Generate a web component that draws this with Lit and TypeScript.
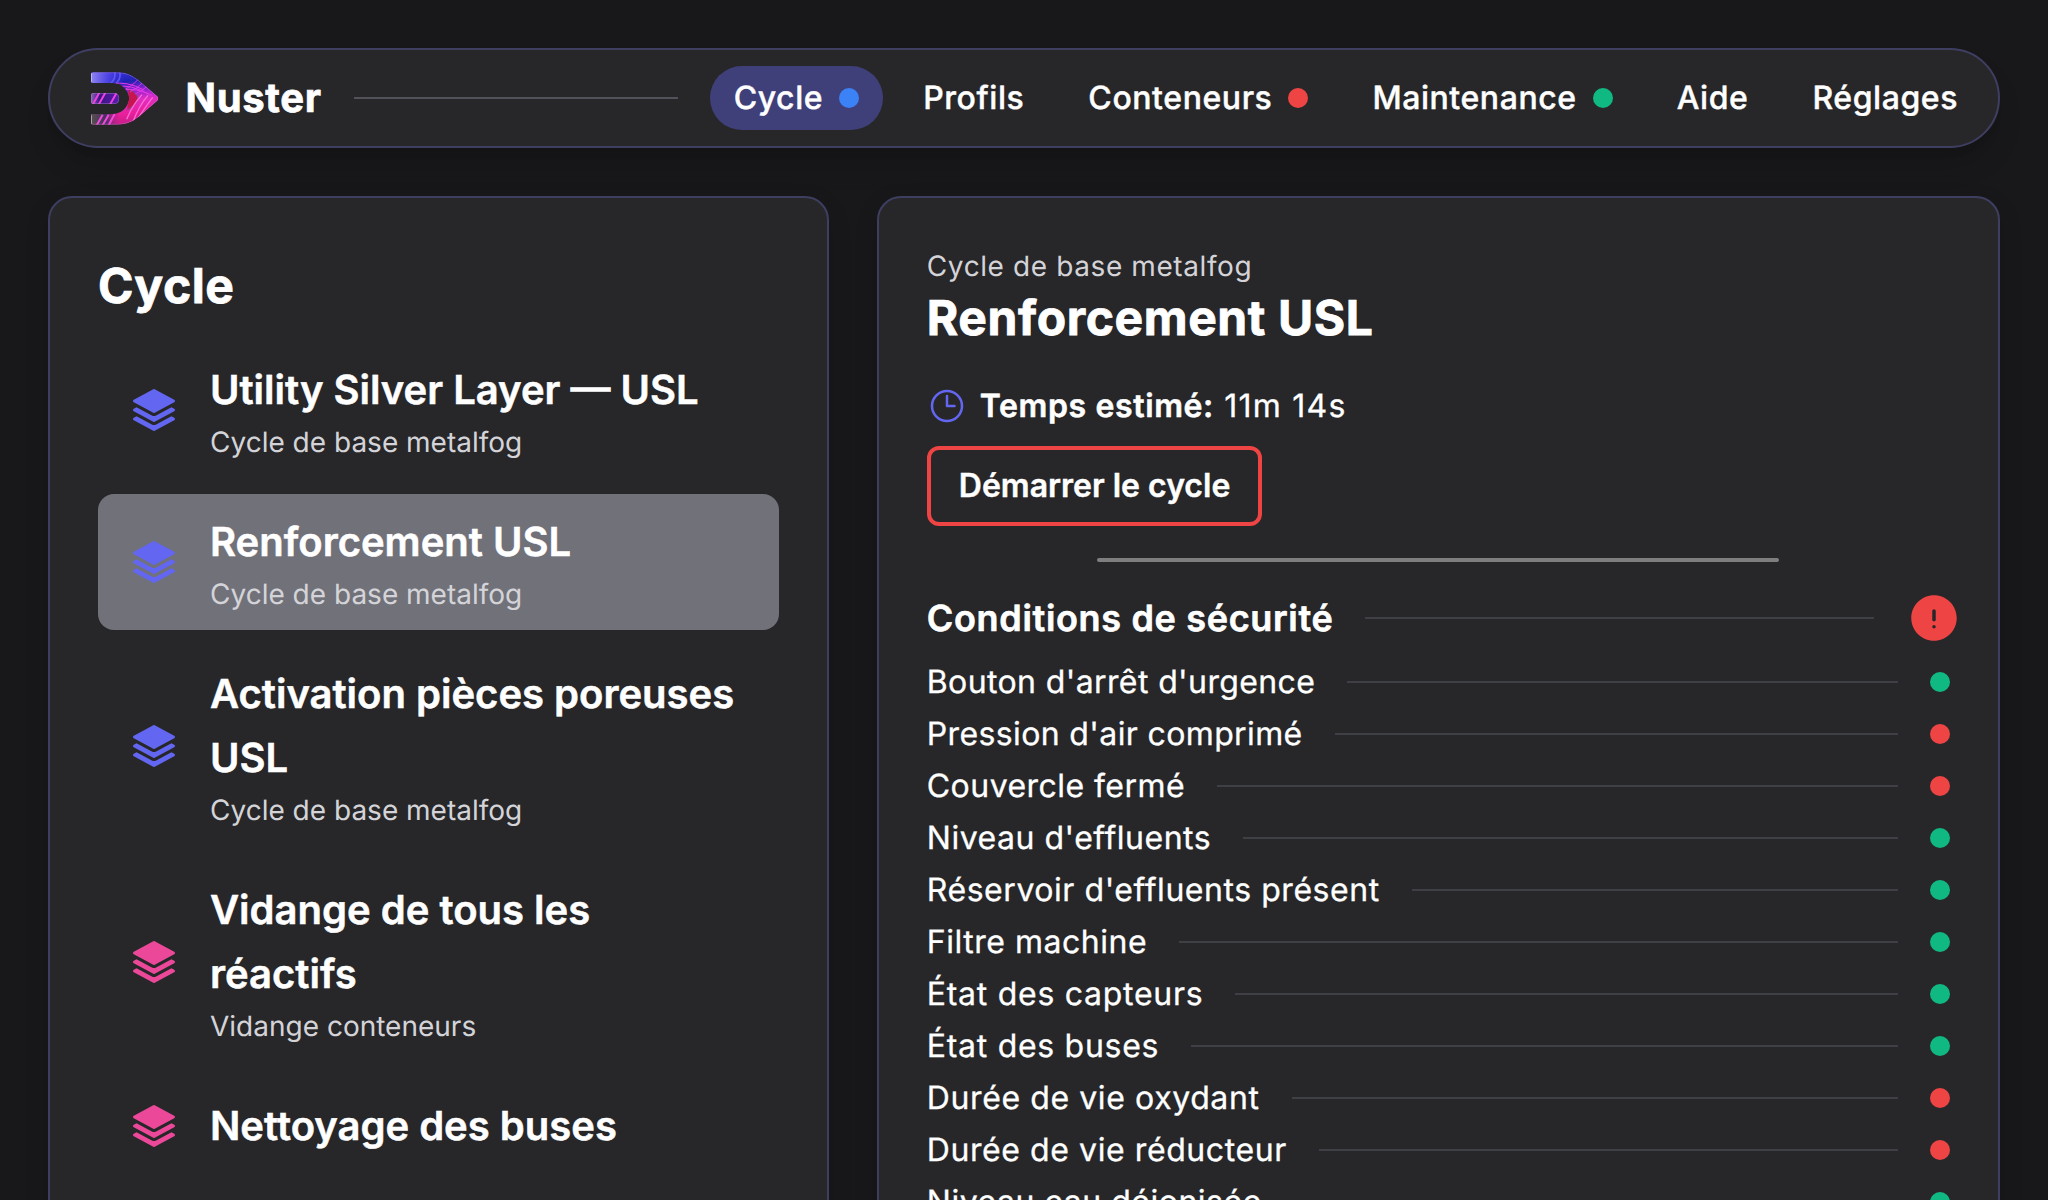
import { LitElement, html, css, svg } from "lit";
import { customElement, property } from "lit/decorators.js";
import { classMap } from "lit/directives/class-map.js";
import { styleMap } from "lit/directives/style-map.js";

type Status = "ok" | "error" | "info";

interface NavItem {
  label: string;
  status?: Status;
  active?: boolean;
}

interface CycleItem {
  title: string;
  subtitle?: string;
  tone: "indigo" | "pink";
  selected?: boolean;
}

interface Condition {
  label: string;
  status: Status;
  /** Letter spacing of the label, in pixels. */
  tracking: number;
}

const NAV: NavItem[] = [
  { label: "Cycle", status: "info", active: true },
  { label: "Profils" },
  { label: "Conteneurs", status: "error" },
  { label: "Maintenance", status: "ok" },
  { label: "Aide" },
  { label: "Réglages" },
];

const CYCLES: CycleItem[] = [
  { title: "Utility Silver Layer — USL", subtitle: "Cycle de base metalfog", tone: "indigo" },
  { title: "Renforcement USL", subtitle: "Cycle de base metalfog", tone: "indigo", selected: true },
  { title: "Activation pièces poreuses USL", subtitle: "Cycle de base metalfog", tone: "indigo" },
  { title: "Vidange de tous les réactifs", subtitle: "Vidange conteneurs", tone: "pink" },
  { title: "Nettoyage des buses", tone: "pink" },
];

const CONDITIONS: Condition[] = [
  { label: "Bouton d'arrêt d'urgence", status: "ok", tracking: 0.38 },
  { label: "Pression d'air comprimé", status: "error", tracking: 0.37 },
  { label: "Couvercle fermé", status: "error", tracking: 0.45 },
  { label: "Niveau d'effluents", status: "ok", tracking: 0.51 },
  { label: "Réservoir d'effluents présent", status: "ok", tracking: 0.55 },
  { label: "Filtre machine", status: "ok", tracking: 0.52 },
  { label: "État des capteurs", status: "ok", tracking: 0.72 },
  { label: "État des buses", status: "ok", tracking: 0.71 },
  { label: "Durée de vie oxydant", status: "error", tracking: 0.6 },
  { label: "Durée de vie réducteur", status: "error", tracking: 0.58 },
  { label: "Niveau eau déionisée", status: "ok", tracking: 0.5 },
];

@customElement("status-dot")
export class StatusDot extends LitElement {
  @property() status: Status = "ok";

  static styles = css`
    :host { display: block; flex: none; }
    .dot { width: 20px; height: 20px; border-radius: 50%; background: #10b981; }
    .error { background: #ef4444; }
    .info { background: #3b82f6; }
  `;

  render() {
    return html`<div class="dot ${this.status}"></div>`;
  }
}

@customElement("brand-logo")
export class BrandLogo extends LitElement {
  static styles = css`
    :host { display: block; flex: none; }
    svg { display: block; width: 68px; height: 53px; }
  `;

  render() {
    return html`<svg viewBox="33 34 204 159" aria-hidden="true">
      <defs>
        <linearGradient id="body" x1="0.35" y1="0" x2="0.5" y2="1">
          <stop offset="0" stop-color="#3a2fd8" />
          <stop offset="0.2" stop-color="#1d22b0" />
          <stop offset="0.36" stop-color="#8a22d0" />
          <stop offset="0.56" stop-color="#e02fc4" />
          <stop offset="0.8" stop-color="#ea1f9a" />
          <stop offset="1" stop-color="#c01f86" />
        </linearGradient>
        <linearGradient id="fadeTop" x1="0" y1="0" x2="1" y2="0">
          <stop offset="0" stop-color="#8f86f0" />
          <stop offset="0.5" stop-color="#5548ea" stop-opacity="0.8" />
          <stop offset="1" stop-color="#2a30e0" stop-opacity="0" />
        </linearGradient>
        <linearGradient id="fadeLow" x1="0" y1="0" x2="1" y2="0">
          <stop offset="0" stop-color="#55514c" />
          <stop offset="0.5" stop-color="#4a2c66" />
          <stop offset="1" stop-color="#c42090" stop-opacity="0" />
        </linearGradient>
        <linearGradient id="mid" x1="0" y1="0" x2="1" y2="0">
          <stop offset="0" stop-color="#8d62b8" />
          <stop offset="0.3" stop-color="#3a1580" />
          <stop offset="1" stop-color="#5a1cb0" />
        </linearGradient>
        <clipPath id="shape">
          <path d="M39 35H112C140 35 156 44 176 59L232 107Q238 113 232 120L178 167C156 184 140 192 112 192H39Q33 192 33 186V166Q33 160 39 160H98C124 160 144 142 148 113C144 85 124 67 98 67H39Q33 67 33 61V41Q33 35 39 35Z" />
        </clipPath>
        <clipPath id="bar">
          <path d="M39 97H102Q118 97 118 113.500Q118 130 102 130H39Q33 130 33 124V103Q33 97 39 97Z" />
        </clipPath>
      </defs>
      <g clip-path="url(#shape)">
        <rect x="33" y="34" width="204" height="159" fill="url(#body)" />
        <rect x="33" y="34" width="105" height="34" fill="url(#fadeTop)" />
        <rect x="33" y="159" width="90" height="34" fill="url(#fadeLow)" />
        <path d="M146 86C162 94 172 104 172 114S160 136 142 146Z" fill="#c81450" />
        <path d="M144 84C162 92 173 103 173 114S162 138 140 148" fill="none" stroke="#7b4c72" stroke-width="3" />
        <g fill="none" stroke="#6b5cf6" stroke-width="5" opacity="0.85">
          <path d="M92 68Q108 54 104 34M108 68Q124 54 119 34" />
        </g>
        <g fill="none" stroke="#e43be6" stroke-width="3">
          <path d="M98 70Q138 60 192 88M112 78Q150 70 206 100M128 88Q166 80 216 104" />
          <path d="M136 86Q168 66 176 54M150 94Q178 78 190 64M166 100Q190 88 202 76" stroke-width="2.500" />
        </g>
        <g fill="none" stroke="#ff6ad8" stroke-width="4">
          <path d="M186 102Q158 132 140 176M204 104Q176 136 158 186M218 110Q194 142 172 176" />
        </g>
        <g fill="none" stroke="#f04ad8" stroke-width="6">
          <path d="M68 162L50 194M86 162L68 194M104 160L86 194" />
        </g>
        <path d="M39 36H112C140 36 156 45 176 60L232 108Q238 113 232 119L178 166C156 183 140 191 112 191H39Q34 191 34 186V166" fill="none" stroke="#c79be0" stroke-width="2" opacity="0.65" />
        <path d="M33 68V36" stroke="#d9d4ff" stroke-width="6" opacity="0.6" />
        <path d="M33 192V160" stroke="#cfc9c4" stroke-width="5" opacity="0.7" />
      </g>
      <g clip-path="url(#bar)">
        <rect x="33" y="97" width="86" height="34" fill="url(#mid)" />
        <path d="M58 96L38 132M76 96L56 132M110 96L90 132" fill="none" stroke="#ee3fe0" stroke-width="6" />
        <path d="M39 98H102Q117 98 117 113.500Q117 129 102 129H39Q34 129 34 124V103Q34 98 39 98Z" fill="none" stroke="#b48ccc" stroke-width="2" opacity="0.7" />
      </g>
    </svg>`;
  }
}

const stackIcon = svg`
  <path d="M11.644 1.59a.75.75 0 0 1 .712 0l9.750 5.250a.75.75 0 0 1 0 1.320l-9.750 5.250a.75.75 0 0 1-.712 0l-9.750-5.250a.75.75 0 0 1 0-1.320l9.750-5.250Z" />
  <path d="m3.265 10.602 7.668 4.129a2.250 2.250 0 0 0 2.134 0l7.668-4.130 1.370.739a.75.75 0 0 1 0 1.320l-9.750 5.250a.75.75 0 0 1-.710 0l-9.750-5.250a.75.75 0 0 1 0-1.320l1.370-.738Z" />
  <path d="m10.933 19.231-7.668-4.130-1.370.739a.75.75 0 0 0 0 1.320l9.750 5.250c.221.120.489.120.710 0l9.750-5.250a.75.75 0 0 0 0-1.320l-1.370-.738-7.668 4.130a2.250 2.250 0 0 1-2.134-.001Z" />
`;

@customElement("app-header")
export class AppHeader extends LitElement {
  static styles = css`
    :host { display: block; }
    .bar {
      box-sizing: border-box;
      height: 100px;
      display: flex;
      align-items: center;
      padding: 0 16px 0 41px;
      border: 2px solid #3e3f60;
      border-radius: 50px;
      background: #27272a;
      box-shadow: 0 20px 30px -6px rgba(0, 0, 0, 0.16), 0 8px 12px -8px rgba(0, 0, 0, 0.12);
    }
    .brand { margin: 0 0 0 26.5px; font-size: 40px; line-height: 56px; font-weight: 700; letter-spacing: 0.65px; -webkit-text-stroke: 0.7px #fff; color: #fff; }
    .rule { flex: 1; height: 2px; margin: 0 32px; background: #52525b; }
    .nav { display: flex; gap: 16px; }
    .link {
      display: flex;
      align-items: center;
      gap: 16px;
      height: 64px;
      padding: 0 24px;
      border-radius: 32px;
      font-size: 32px;
      font-weight: 500;
      letter-spacing: 0.57px;
      -webkit-text-stroke: 0.4px #fff;
      color: #fff;
      white-space: nowrap;
    }
    .label { padding-bottom: 2px; }
    .active { background: #3f407a; }
  `;

  render() {
    return html`<header class="bar">
      <brand-logo></brand-logo>
      <h1 class="brand">Nuster</h1>
      <div class="rule"></div>
      <nav class="nav">
        ${NAV.map(
          (n) => html`<a class=${classMap({ link: true, active: !!n.active })}>
            <span class="label">${n.label}</span>
            ${n.status ? html`<status-dot .status=${n.status}></status-dot>` : null}
          </a>`
        )}
      </nav>
    </header>`;
  }
}

@customElement("cycle-list")
export class CycleList extends LitElement {
  static styles = css`
    :host { display: block; }
    .heading { margin: 0 0 17px; font-size: 48px; line-height: 79px; font-weight: 700; letter-spacing: 0.55px; -webkit-text-stroke: 0.8px #fff; }
    .list { display: flex; flex-direction: column; gap: 16px; }
    .item {
      display: flex;
      align-items: center;
      gap: 32px;
      padding: 16px 32px;
      border-radius: 16px;
    }
    .selected { background: #71717a; }
    .icon { flex: none; width: 48px; height: 48px; }
    .indigo { fill: #6366f1; }
    .pink { fill: #ec4899; }
    .title { font-size: 40px; line-height: 64px; font-weight: 600; -webkit-text-stroke: 0.5px #fff; }
    .subtitle { font-size: 28px; line-height: 40px; color: #d4d4d8; }
  `;

  render() {
    return html`
      <h2 class="heading">Cycle</h2>
      <div class="list">
        ${CYCLES.map(
          (c) => html`<div class=${classMap({ item: true, selected: !!c.selected })}>
            <svg class="icon ${c.tone}" viewBox="0 0 24 24" aria-hidden="true">${stackIcon}</svg>
            <div>
              <div class="title">${c.title}</div>
              ${c.subtitle ? html`<div class="subtitle">${c.subtitle}</div>` : null}
            </div>
          </div>`
        )}
      </div>
    `;
  }
}

@customElement("cycle-detail")
export class CycleDetail extends LitElement {
  static styles = css`
    :host { display: block; }
    .kind { font-size: 28px; line-height: 40px; letter-spacing: 0.6px; color: #d4d4d8; }
    .title { margin: 0 0 32px; font-size: 48px; line-height: 64px; font-weight: 700; letter-spacing: 0.6px; -webkit-text-stroke: 0.8px #fff; }
    .time { display: flex; align-items: center; gap: 13px; font-size: 32px; line-height: 48px; letter-spacing: 1.25px; -webkit-text-stroke: 0.3px #fff; margin-bottom: 16px; }
    .time b { font-weight: 600; letter-spacing: 0.62px; -webkit-text-stroke: 0.5px #fff; }
    .clock { flex: none; width: 40px; height: 40px; fill: none; stroke: #6366f1; stroke-width: 1.5; stroke-linecap: round; stroke-linejoin: round; }
    .start {
      display: block;
      box-sizing: border-box;
      height: 80px;
      padding: 0 28px;
      border: 4px solid #ef4444;
      border-radius: 12px;
      background: none;
      color: #fff;
      font: 600 32px/48px Inter, "Liberation Sans", sans-serif;
      -webkit-text-stroke: 0.4px #fff;
    }
    .divider { width: 66.6667%; height: 4px; margin: 32px auto 28px; border-radius: 2px; background: #7f7f80; }
    .row { display: flex; align-items: center; gap: 32px; height: 48px; margin-bottom: 4px; font-size: 32px; white-space: nowrap; -webkit-text-stroke: 0.3px #fff; }
    .label { padding-bottom: 2px; }
    .head { height: 56px; margin-bottom: 12px; font-size: 36px; font-weight: 600; letter-spacing: 0.67px; -webkit-text-stroke: 0.6px #fff; }
    .line { flex: 1; height: 2px; background: #3f3f46; }
    .alert { flex: none; width: 56px; height: 56px; margin-right: -12px; fill: #ef4444; }
  `;

  render() {
    return html`
      <div class="kind">Cycle de base metalfog</div>
      <h2 class="title">Renforcement USL</h2>
      <div class="time">
        <svg class="clock" viewBox="0 0 24 24" aria-hidden="true">
          <path d="M12 6v6h4.500M21 12a9 9 0 1 1-18 0 9 9 0 0 1 18 0Z" />
        </svg>
        <span><b>Temps estimé:</b> 11m 14s</span>
      </div>
      <button class="start">Démarrer le cycle</button>
      <div class="divider"></div>
      <div class="row head">
        <span>Conditions de sécurité</span>
        <div class="line"></div>
        <svg class="alert" viewBox="0 0 24 24" aria-hidden="true">
          <path fill-rule="evenodd" d="M2.250 12c0-5.385 4.365-9.750 9.750-9.750s9.750 4.365 9.750 9.750-4.365 9.750-9.750 9.750S2.250 17.385 2.250 12ZM12 8.250a.75.75 0 0 1 .75.75v3.750a.75.75 0 0 1-1.500 0V9a.75.75 0 0 1 .75-.75Zm0 8.250a.75.75 0 1 0 0-1.500.75.75 0 0 0 0 1.500Z" />
        </svg>
      </div>
      ${CONDITIONS.map(
        (c) => html`<div class="row">
          <span class="label" style=${styleMap({ letterSpacing: `${c.tracking}px` })}>${c.label}</span>
          <div class="line"></div>
          <status-dot .status=${c.status}></status-dot>
        </div>`
      )}
    `;
  }
}

@customElement("app-root")
export class AppRoot extends LitElement {
  static styles = css`
    :host {
      display: block;
      box-sizing: border-box;
      height: 100vh;
      overflow: hidden;
      padding: 48px;
      background: #18181b;
      color: #fff;
      font-family: Inter, "Liberation Sans", sans-serif;
      text-rendering: geometricPrecision;
    }
    .content {
      display: grid;
      grid-template-columns: 780.8px 1fr;
      gap: 48px;
      margin-top: 48px;
    }
    .card {
      box-sizing: border-box;
      min-height: 1120px;
      padding: 48px;
      border: 2px solid #3e3f60;
      border-radius: 24px;
      background: #27272a;
      box-shadow: 0 8px 24px rgba(0, 0, 0, 0.12);
    }
  `;

  render() {
    return html`
      <app-header></app-header>
      <main class="content">
        <section class="card"><cycle-list></cycle-list></section>
        <section class="card"><cycle-detail></cycle-detail></section>
      </main>
    `;
  }
}
